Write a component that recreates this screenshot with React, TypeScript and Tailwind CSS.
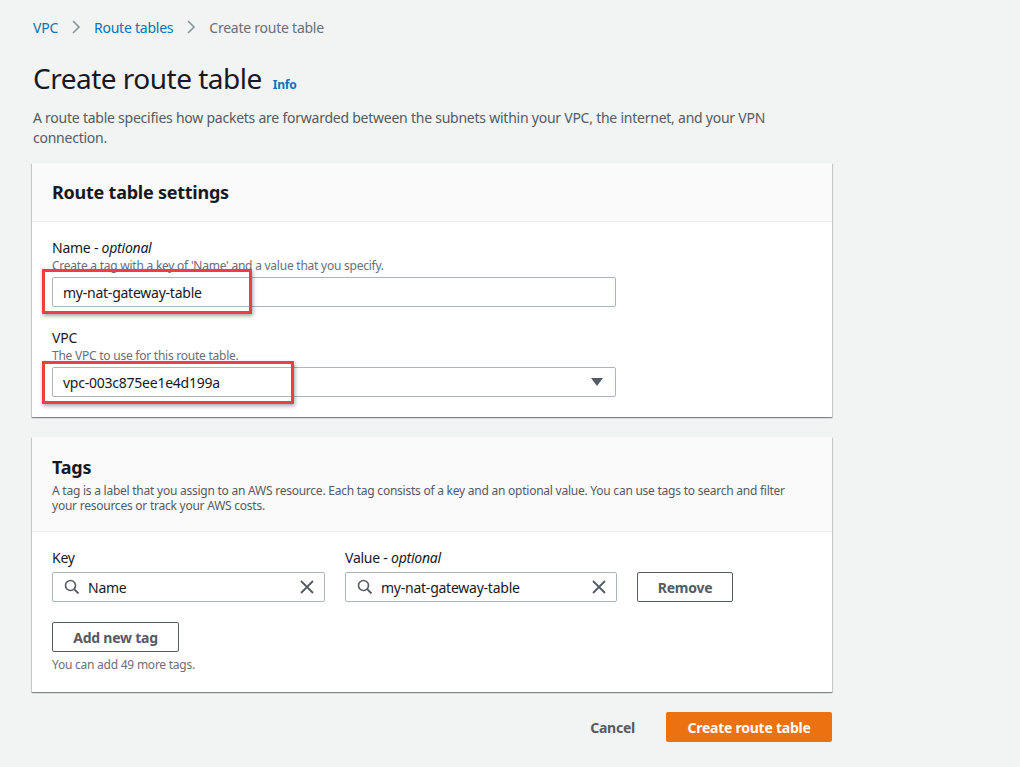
import React from "react";

const cardShadow =
  "shadow-[0_1px_1px_0_rgba(0,28,36,0.3),1px_1px_1px_0_rgba(0,28,36,0.15),-1px_1px_1px_0_rgba(0,28,36,0.15)]";

function Chevron() {
  return (
    <svg width="10" height="14" viewBox="0 0 10 14" className="mx-[13px]">
      <path d="M2 1 L8 7 L2 13" fill="none" stroke="#879596" strokeWidth="1.6" />
    </svg>
  );
}

function SearchIcon() {
  return (
    <svg width="16" height="16" viewBox="0 0 16 16">
      <circle cx="6.5" cy="6.5" r="5" fill="none" stroke="#545b64" strokeWidth="1.6" />
      <path d="M10.2 10.2 L14.5 14.5" stroke="#545b64" strokeWidth="1.8" />
    </svg>
  );
}

function XIcon() {
  return (
    <svg width="14" height="14" viewBox="0 0 14 14">
      <path d="M1 1 L13 13 M13 1 L1 13" stroke="#545b64" strokeWidth="1.8" />
    </svg>
  );
}

function RedBox({ className }: { className: string }) {
  return (
    <div
      className={`pointer-events-none absolute border-[3px] border-[#ec3f3f] shadow-[1px_2px_4px_rgba(0,0,0,0.35)] ${className}`}
    />
  );
}

export default function App() {
  return (
    <div
      className="min-h-[767px] w-[1020px] bg-[#f2f3f3] text-[#16191f] tracking-[-0.015em]"
      style={{ fontFamily: '"Noto Sans", "Open Sans", Arial, sans-serif' }}
    >
      <div className="w-[800px] pl-[32px] box-content pt-[16px]">
        {/* breadcrumb */}
        <div className="flex items-center h-[22px] text-[14px] pl-px">
          <span className="text-[#0073bb]">VPC</span>
          <Chevron />
          <span className="text-[#0073bb]">Route tables</span>
          <Chevron />
          <span className="text-[#687078]">Create route table</span>
        </div>

        {/* title */}
        <div className="flex items-baseline mt-[23px] pl-px">
          <h1 className="text-[28px] leading-[34px] font-normal text-[#16191f] tracking-[-0.018em]">Create route table</h1>
          <span className="ml-[11px] text-[12px] font-bold text-[#0073bb]">Info</span>
        </div>
        <p className="mt-[13px] text-[14px] leading-[20px] text-[#545b64] pl-px">
          A route table specifies how packets are forwarded between the subnets within your VPC, the internet, and your VPN
          connection.
        </p>

        {/* Route table settings card */}
        <div className={`mt-[15px] bg-white ${cardShadow}`}>
          <div className="bg-[#fafafa] border-b border-[#eaeded] h-[59px] flex items-center px-[20px]">
            <h2 className="text-[18px] font-bold leading-[22px]">Route table settings</h2>
          </div>
          <div className="px-[20px] pt-[16px] pb-[20px]">
            <div className="text-[14px] leading-[20px]">
              Name - <i>optional</i>
            </div>
            <div className="mt-[1px] text-[12px] leading-[14px] text-[#687078]">
              Create a tag with a key of 'Name' and a value that you specify.
            </div>
            <div className="relative mt-[4px] w-[564px]">
              <div className="h-[30px] border border-[#aab7b8] rounded-[2px] flex items-center px-[10px] text-[14px]">
                my-nat-gateway-table
              </div>
              <RedBox className="left-[-10px] top-[-8px] w-[210px] h-[45px]" />
            </div>

            <div className="mt-[21px] text-[14px] leading-[20px]">VPC</div>
            <div className="mt-[1px] text-[12px] leading-[14px] text-[#687078]">The VPC to use for this route table.</div>
            <div className="relative mt-[4px] w-[564px]">
              <div className="h-[30px] border border-[#aab7b8] rounded-[2px] flex items-center justify-between pl-[10px] pr-[12px] text-[14px]">
                <span>vpc-003c875ee1e4d199a</span>
                <svg width="12" height="8" viewBox="0 0 12 8">
                  <path d="M0 0 H12 L6 8 Z" fill="#545b64" />
                </svg>
              </div>
              <RedBox className="left-[-10px] top-[-6px] w-[252px] h-[43px]" />
            </div>
          </div>
        </div>

        {/* Tags card */}
        <div className={`mt-[20px] bg-white ${cardShadow}`}>
          <div className="bg-[#fafafa] border-b border-[#eaeded] px-[20px] pt-[19px] pb-[18px]">
            <h2 className="text-[18px] font-bold leading-[22px]">Tags</h2>
            <p className="mt-[5px] text-[12px] leading-[15px] text-[#545b64]">
              A tag is a label that you assign to an AWS resource. Each tag consists of a key and an optional value. You can use
              tags to search and filter your resources or track your AWS costs.
            </p>
          </div>
          <div className="px-[20px] pt-[16px] pb-[19px]">
            <div className="flex items-end">
              <div className="w-[273px]">
                <div className="text-[14px] leading-[20px] mb-[4px]">Key</div>
                <div className="h-[30px] border border-[#aab7b8] rounded-[2px] flex items-center pl-[11px] pr-[10px] text-[14px]">
                  <SearchIcon />
                  <span className="ml-[8px] flex-1">Name</span>
                  <XIcon />
                </div>
              </div>
              <div className="w-[272px] ml-[20px]">
                <div className="text-[14px] leading-[20px] mb-[4px]">
                  Value - <i>optional</i>
                </div>
                <div className="h-[30px] border border-[#aab7b8] rounded-[2px] flex items-center pl-[11px] pr-[10px] text-[14px]">
                  <SearchIcon />
                  <span className="ml-[8px] flex-1">my-nat-gateway-table</span>
                  <XIcon />
                </div>
              </div>
              <button className="ml-[20px] w-[96px] h-[30px] border border-[#545b64] rounded-[2px] bg-white text-[14px] font-bold text-[#545b64]">
                Remove
              </button>
            </div>
            <button className="mt-[20px] w-[127px] h-[30px] border border-[#545b64] rounded-[2px] bg-white text-[14px] font-bold text-[#545b64]">
              Add new tag
            </button>
            <div className="mt-[5px] text-[12px] leading-[16px] text-[#687078]">You can add 49 more tags.</div>
          </div>
        </div>

        {/* footer buttons */}
        <div className="mt-[20px] flex justify-end items-center">
          <button className="text-[14px] font-bold text-[#545b64] mr-[31px]">Cancel</button>
          <button className="w-[166px] h-[30px] bg-[#ec7211] rounded-[2px] text-[14px] font-bold text-white">
            Create route table
          </button>
        </div>
      </div>
    </div>
  );
}
